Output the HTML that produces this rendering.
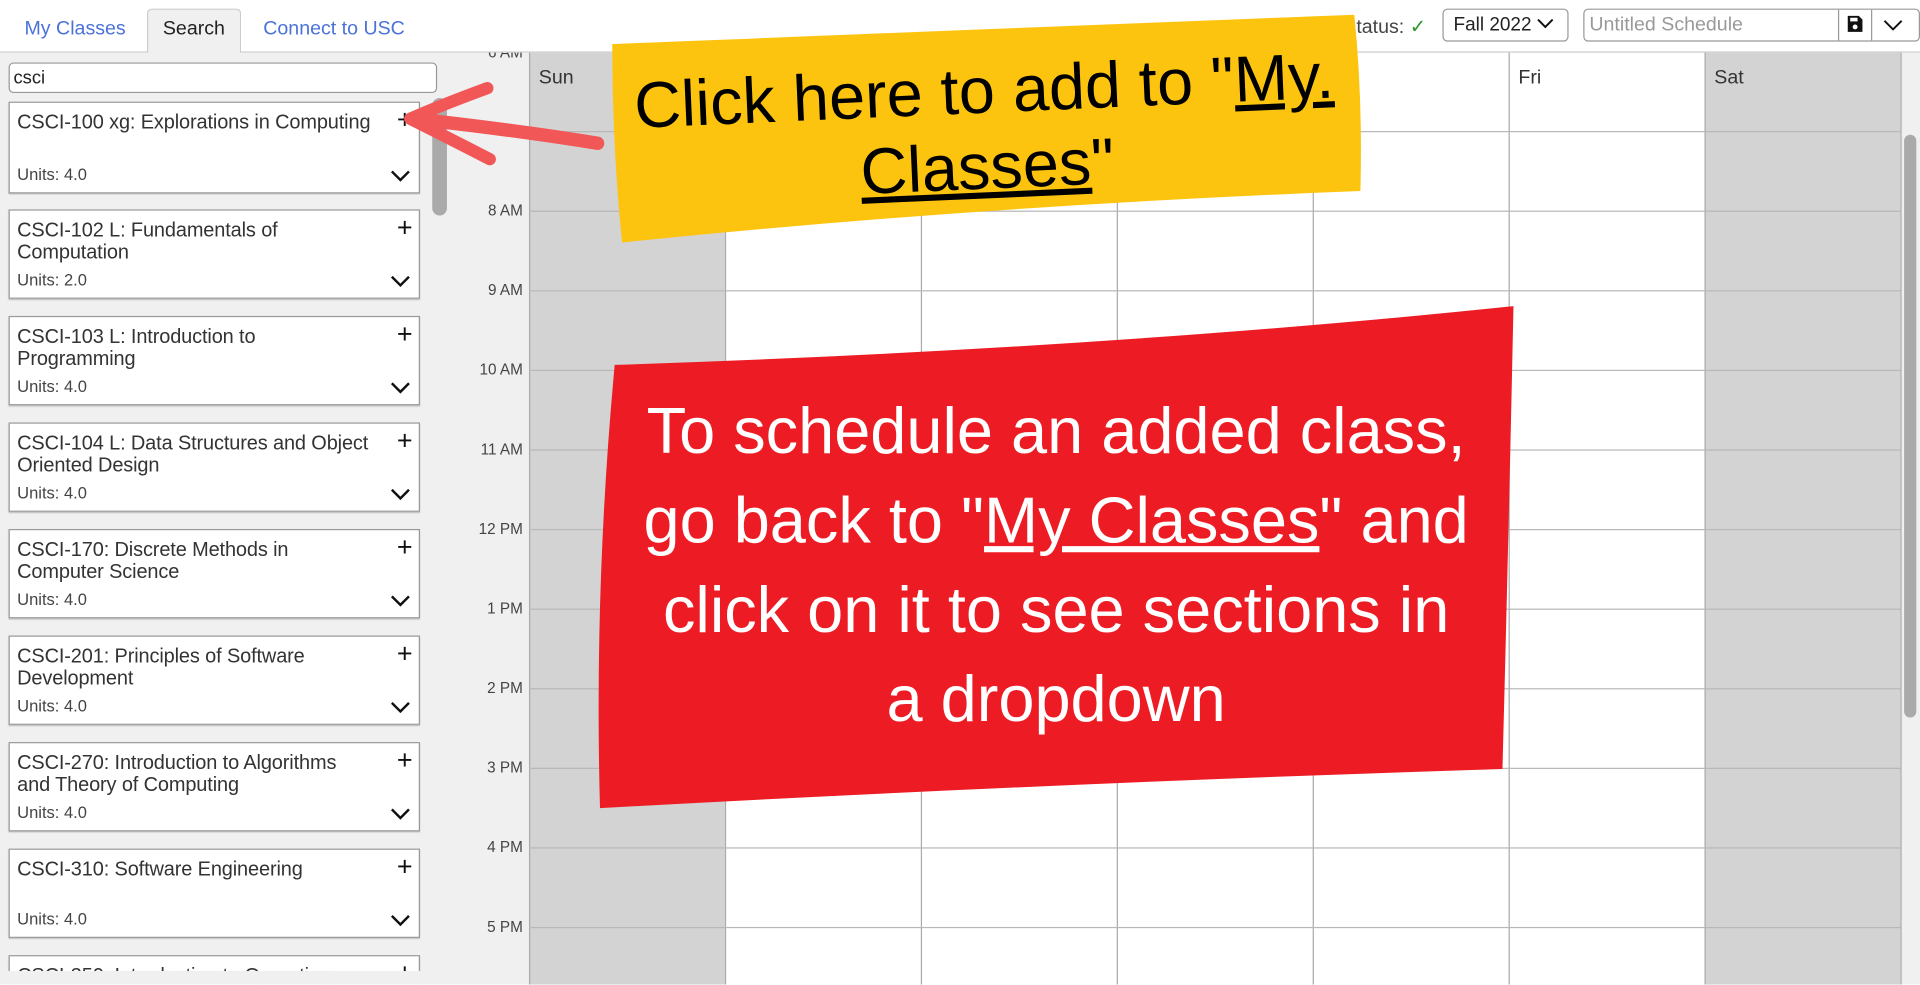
<!DOCTYPE html>
<html><head><meta charset="utf-8">
<style>
*{box-sizing:border-box;margin:0;padding:0}
html,body{width:1920px;height:984px;overflow:hidden;background:#fff}
#w{position:absolute;left:0;top:0;width:1568px;height:804px;transform:scale(1.22449);transform-origin:0 0;font-family:"Liberation Sans",sans-serif;color:#222;overflow:hidden}
.a{position:absolute}
.tab{position:absolute;top:15px;font-size:16px;color:#4a72d9}
.card{position:absolute;left:7px;width:336px;height:73px;background:#fff;border:1px solid #9a9a9a;box-shadow:0 1px 1px #bbb;overflow:hidden}
.card .t{position:absolute;left:6px;top:7px;width:310px;font-size:16.3px;line-height:18px;color:#333;letter-spacing:-0.1px;white-space:nowrap}
.card .p{position:absolute;right:5px;top:1px;font-size:22px;color:#111}
.card .u{position:absolute;left:6px;bottom:7px;font-size:13.5px;color:#444}
.card svg{position:absolute;right:6px;bottom:8px}
.tl{position:absolute;left:365px;font-size:12.5px;color:#444;width:62px;text-align:right}
.hl{position:absolute;left:432px;width:1120px;height:1px;background:#b8b8b8}
.vl{position:absolute;top:43px;width:1px;height:761px;background:#aaa}
.dn{position:absolute;top:55px;font-size:16px;color:#333}
</style></head><body><div id="w">
<div class="a" style="left:0;top:42px;width:1568px;height:1px;background:#ccc"></div>
<div class="a" style="left:120px;top:7px;width:77px;height:37px;background:#f0f0f0;border:1px solid #ccc;border-bottom:none;border-radius:4px 4px 0 0"></div>
<div class="tab" style="left:20px">My Classes</div>
<div class="tab" style="left:133px;color:#222">Search</div>
<div class="tab" style="left:215px">Connect to USC</div>
<div class="a" style="left:0;top:43px;width:432px;height:761px;background:#f0f0f0"></div>
<div class="a" style="left:7px;top:51px;width:350px;height:25px;background:#fff;border:1px solid #999;border-radius:4px;font-size:15px;padding:3px 0 0 3px">csci</div>
<div class="a" style="left:353px;top:80px;width:12px;height:96px;background:#aaa;border-radius:6px"></div>

<div class="card" style="top:83px;height:75px"><div class="t">CSCI-100 xg: Explorations in Computing</div><div class="p">+</div><div class="u">Units: 4.0</div><svg width="18" height="12" viewBox="0 0 18 12"><path d="M2 3l7 7 7-7" fill="none" stroke="#111" stroke-width="2"/></svg></div>
<div class="card" style="top:171px"><div class="t">CSCI-102 L: Fundamentals of<br>Computation</div><div class="p">+</div><div class="u">Units: 2.0</div><svg width="18" height="12" viewBox="0 0 18 12"><path d="M2 3l7 7 7-7" fill="none" stroke="#111" stroke-width="2"/></svg></div>
<div class="card" style="top:258px"><div class="t">CSCI-103 L: Introduction to<br>Programming</div><div class="p">+</div><div class="u">Units: 4.0</div><svg width="18" height="12" viewBox="0 0 18 12"><path d="M2 3l7 7 7-7" fill="none" stroke="#111" stroke-width="2"/></svg></div>
<div class="card" style="top:345px"><div class="t">CSCI-104 L: Data Structures and Object<br>Oriented Design</div><div class="p">+</div><div class="u">Units: 4.0</div><svg width="18" height="12" viewBox="0 0 18 12"><path d="M2 3l7 7 7-7" fill="none" stroke="#111" stroke-width="2"/></svg></div>
<div class="card" style="top:432px"><div class="t">CSCI-170: Discrete Methods in<br>Computer Science</div><div class="p">+</div><div class="u">Units: 4.0</div><svg width="18" height="12" viewBox="0 0 18 12"><path d="M2 3l7 7 7-7" fill="none" stroke="#111" stroke-width="2"/></svg></div>
<div class="card" style="top:519px"><div class="t">CSCI-201: Principles of Software<br>Development</div><div class="p">+</div><div class="u">Units: 4.0</div><svg width="18" height="12" viewBox="0 0 18 12"><path d="M2 3l7 7 7-7" fill="none" stroke="#111" stroke-width="2"/></svg></div>
<div class="card" style="top:606px"><div class="t">CSCI-270: Introduction to Algorithms<br>and Theory of Computing</div><div class="p">+</div><div class="u">Units: 4.0</div><svg width="18" height="12" viewBox="0 0 18 12"><path d="M2 3l7 7 7-7" fill="none" stroke="#111" stroke-width="2"/></svg></div>
<div class="card" style="top:693px"><div class="t">CSCI-310: Software Engineering</div><div class="p">+</div><div class="u">Units: 4.0</div><svg width="18" height="12" viewBox="0 0 18 12"><path d="M2 3l7 7 7-7" fill="none" stroke="#111" stroke-width="2"/></svg></div>
<div class="card" style="top:780px"><div class="t">CSCI-350: Introduction to Operating</div><div class="p">+</div></div>
<div class="a" style="left:0;top:793px;width:370px;height:11px;background:#f0f0f0"></div>

<div class="a" style="left:432px;top:43px;width:160px;height:761px;background:#d3d3d3"></div>
<div class="a" style="left:1392px;top:43px;width:160px;height:761px;background:#d3d3d3"></div>
<div class="a" style="left:1552px;top:43px;width:16px;height:761px;background:#f0f0f0"></div>
<div class="a" style="left:1555px;top:110px;width:10px;height:476px;background:#aaa;border-radius:5px"></div>
<div class="vl" style="left:432px"></div><div class="vl" style="left:592px"></div><div class="vl" style="left:752px"></div><div class="vl" style="left:912px"></div><div class="vl" style="left:1072px"></div><div class="vl" style="left:1232px"></div><div class="vl" style="left:1392px"></div><div class="vl" style="left:1552px"></div>
<div class="hl" style="top:107px"></div><div class="hl" style="top:172px"></div><div class="hl" style="top:237px"></div><div class="hl" style="top:302px"></div><div class="hl" style="top:367px"></div><div class="hl" style="top:432px"></div><div class="hl" style="top:497px"></div><div class="hl" style="top:562px"></div><div class="hl" style="top:627px"></div><div class="hl" style="top:692px"></div><div class="hl" style="top:757px"></div>
<div class="dn" style="left:440px">Sun</div><div class="dn" style="left:1240px">Fri</div><div class="dn" style="left:1400px">Sat</div>
<div class="tl" style="top:36px;clip-path:inset(7px 0 0 0)">6 AM</div>
<div class="tl" style="top:165px">8 AM</div><div class="tl" style="top:230px">9 AM</div><div class="tl" style="top:295px">10 AM</div><div class="tl" style="top:360px">11 AM</div><div class="tl" style="top:425px">12 PM</div><div class="tl" style="top:490px">1 PM</div><div class="tl" style="top:555px">2 PM</div><div class="tl" style="top:620px">3 PM</div><div class="tl" style="top:685px">4 PM</div><div class="tl" style="top:750px">5 PM</div>

<div class="a" style="left:1097px;top:12px;font-size:16px;color:#444">Status: <span style="color:#2a9a2a">✓</span></div>
<div class="a" style="left:1178px;top:7px;width:103px;height:27px;border:1px solid #999;border-radius:4px;font-size:15.5px;padding:4px 0 0 8px">Fall 2022 <svg width="14" height="10" viewBox="0 0 14 10" style="vertical-align:1px"><path d="M1 2l6 6 6-6" fill="none" stroke="#111" stroke-width="1.6"/></svg></div>
<div class="a" style="left:1293px;top:7px;width:275px;height:27px;border:1px solid #999;border-radius:4px;font-size:16px;color:#999;padding:4px 0 0 4px">Untitled Schedule</div>
<div class="a" style="left:1501px;top:8px;width:1px;height:25px;background:#999"></div>
<div class="a" style="left:1528px;top:8px;width:1px;height:25px;background:#999"></div>
<svg class="a" style="left:1508px;top:12px" width="14" height="15" viewBox="0 0 14 15"><path d="M1 1h9l3 3v10H1z" fill="#111"/><rect x="3" y="2.5" width="6" height="3" fill="#fff"/><circle cx="7" cy="10" r="2" fill="#fff"/></svg>
<svg class="a" style="left:1538px;top:15px" width="16" height="10" viewBox="0 0 16 10"><path d="M1 2l7 7 7-7" fill="none" stroke="#111" stroke-width="1.6"/></svg>

<svg class="a" style="left:0;top:0" width="1568" height="804">
<path d="M500 36 Q700 28 1106 12 Q1113 80 1111 156 Q800 168 508 198 Q500 120 500 36Z" fill="#fdc40f"/>
<path d="M488 117 Q420 106 338 97" stroke="#f25757" stroke-width="11" fill="none" stroke-linecap="round"/>
<path d="M398 72 Q360 86 335 97 Q365 112 400 130" stroke="#f25757" stroke-width="10" fill="none" stroke-linecap="round" stroke-linejoin="round"/>
<path d="M502 298 Q900 285 1236 250 Q1232 440 1227 628 Q850 640 490 660 Q485 480 502 298Z" fill="#ed1c24"/>
</svg>
<div class="a" style="left:480px;top:44px;width:650px;text-align:center;font-size:53px;line-height:62px;color:#000;transform:rotate(-2.5deg)">Click here to add to "<u>My.</u><br><u>Classes</u>"</div>
<div class="a" style="left:470px;top:316px;width:785px;text-align:center;font-size:53px;line-height:73px;color:#fff">To schedule an added class,<br>go back to "<u>My Classes</u>" and<br>click on it to see sections in<br>a dropdown</div>
</div></body></html>
